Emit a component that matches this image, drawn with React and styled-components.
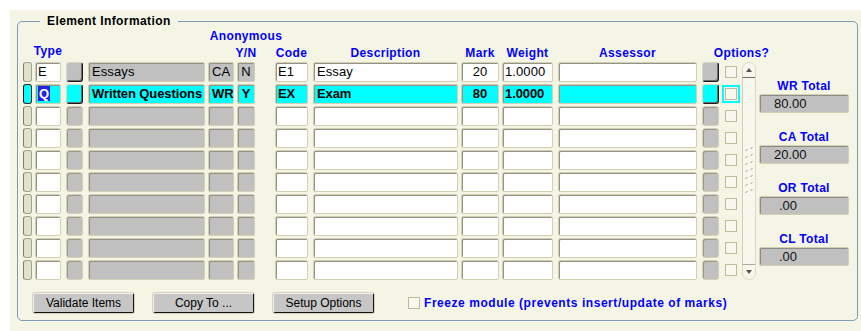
import React from 'react';
import styled, { createGlobalStyle, css } from 'styled-components';

const BEIGE = '#f5f5e6';
const BLUE = '#0000ff';
const CYAN = '#00ffff';
const GRAY = '#c0c0c0';

const records = [
  { type: 'E', name: 'Essays', ca: 'CA', yn: 'N', code: 'E1', desc: 'Essay', mark: '20', weight: '1.0000' },
  { type: 'Q', name: 'Written Questions', ca: 'WR', yn: 'Y', code: 'EX', desc: 'Exam', mark: '80', weight: '1.0000', current: true },
  ...Array.from({ length: 8 }, () => ({ empty: true })),
];

const totals = [
  { label: 'WR Total', value: '80.00', indent: 14 },
  { label: 'CA Total', value: '20.00', indent: 14 },
  { label: 'OR Total', value: '.00', indent: 19 },
  { label: 'CL Total', value: '.00', indent: 19 },
];

const App = () => {
  return (
    <>
      <GlobalStyle />
      <Page>
        <Panel>
          <Frame>
            <Legend>Element Information</Legend>
            <Sheet>
              <Header>
                <HeadCell $w={9} $ml={0} />
                <HeadCell $w={26} $ml={3} $lift={2}>Type</HeadCell>
                <HeadCell $w={17} $ml={5} />
                <HeadCell $w={117} $ml={5} />
                <HeadCell $w={26} $ml={3} />
                <HeadCell $w={18} $ml={3}>
                  <span>Anonymous</span>
                  <span>Y/N</span>
                </HeadCell>
                <HeadCell $w={33} $ml={20}>Code</HeadCell>
                <HeadCell $w={145} $ml={5}>Description</HeadCell>
                <HeadCell $w={38} $ml={3}>Mark</HeadCell>
                <HeadCell $w={51} $ml={3}>Weight</HeadCell>
                <HeadCell $w={139} $ml={5}>Assessor</HeadCell>
                <HeadCell $w={17} $ml={5} />
                <HeadCell $w={33} $ml={6}>Options?</HeadCell>
              </Header>

              <Records>
                {records.map((r, i) => {
                  const filled = !r.empty;
                  const on = !!r.current;
                  return (
                    <Record key={i}>
                      <Indicator $active={on} />
                      <Field $w={26} $ml={3} $pad={2} $active={on}>
                        {on ? <Selected>{r.type}</Selected> : r.type}
                      </Field>
                      <LovButton $ml={5} $raised={filled} $active={on} />
                      <Field $w={117} $ml={5} $tone="gray" $active={on}>{r.name}</Field>
                      <Field $w={26} $ml={3} $tone="gray" $active={on}>{r.ca}</Field>
                      <Field $w={18} $ml={3} $tone="gray" $align="center" $pad={0} $active={on}>{r.yn}</Field>
                      <Field $w={33} $ml={20} $pad={2} $active={on}>{r.code}</Field>
                      <Field $w={145} $ml={5} $active={on}>{r.desc}</Field>
                      <Field $w={38} $ml={3} $align="center" $active={on}>{r.mark}</Field>
                      <Field $w={51} $ml={3} $pad={2} $active={on}>{r.weight}</Field>
                      <Field $w={139} $ml={5} $active={on} />
                      <LovButton $ml={5} $raised={i === 0} $active={on} />
                      <CheckCell>
                        <Check $focus={on} />
                      </CheckCell>
                    </Record>
                  );
                })}
              </Records>

              <Scroll>
                <Arrow $dir="up" />
                <Thumb>
                  <svg width="9" height="48" viewBox="0 0 9 48">
                    {Array.from({ length: 7 }).map((_, k) => (
                      <g key={k} stroke="#9c9c8c" strokeWidth="1">
                        <line x1="0.5" y1={k * 7 + 4} x2="2.5" y2={k * 7 + 2} />
                        <line x1="5.5" y1={k * 7 + 2} x2="7.5" y2={k * 7} />
                      </g>
                    ))}
                  </svg>
                </Thumb>
                <Arrow $dir="down" />
              </Scroll>

              <Totals>
                {totals.map((t) => (
                  <TotalGroup key={t.label}>
                    <TotalLabel>{t.label}</TotalLabel>
                    <TotalBox $indent={t.indent}>{t.value}</TotalBox>
                  </TotalGroup>
                ))}
              </Totals>
            </Sheet>

            <Footer>
              <Button>Validate Items</Button>
              <Button>Copy To ...</Button>
              <Button>Setup Options</Button>
              <Freeze>
                <Check />
                <FreezeText>Freeze module (prevents insert/update of marks)</FreezeText>
              </Freeze>
            </Footer>
          </Frame>
        </Panel>
      </Page>
    </>
  );
};

export default App;

const GlobalStyle = createGlobalStyle`
  html, body {
    margin: 0;
    padding: 0;
    background: #ffffff;
  }
  body {
    font-family: "Liberation Sans", Arial, sans-serif;
    color: #000;
  }
`;

const Page = styled.div`
  padding: 10px 0 0 10px;
`;

const Panel = styled.div`
  box-sizing: border-box;
  height: 321px;
  background: ${BEIGE};
  padding: 4px 0 0 7px;
`;

const Frame = styled.fieldset`
  box-sizing: border-box;
  width: 841px;
  margin: 0;
  padding: 0 8px 7px 5px;
  border: 1px solid #7f9db9;
  border-radius: 5px;
  min-width: 0;
`;

const Legend = styled.legend`
  margin-left: 17px;
  padding: 0 7px;
  font-size: 12px;
  line-height: 14px;
  font-weight: 700;
  letter-spacing: 0.4px;
  color: #000;
`;

const Sheet = styled.div`
  display: grid;
  grid-template-columns: auto 14px 90px;
  grid-template-rows: 34px auto;
  column-gap: 3px;
`;

const Header = styled.div`
  grid-column: 1 / -1;
  display: flex;
  height: 34px;
`;

const HeadCell = styled.div`
  flex: none;
  width: ${(p) => p.$w}px;
  margin-left: ${(p) => p.$ml}px;
  padding-bottom: ${(p) => p.$lift || 0}px;
  display: flex;
  flex-direction: column;
  align-items: center;
  justify-content: flex-end;
  white-space: nowrap;
  font-size: 12px;
  line-height: 17px;
  font-weight: 700;
  letter-spacing: 0.35px;
  color: ${BLUE};
`;

const Records = styled.div`
  display: flex;
  flex-direction: column;
  gap: 2px;
  padding-right: 1px;
`;

const Record = styled.div`
  display: flex;
  align-items: center;
  height: 20px;
`;

const Indicator = styled.div`
  box-sizing: border-box;
  flex: none;
  width: 9px;
  height: 20px;
  border-radius: 3px;
  border: 1px solid ${(p) => (p.$active ? '#2a2a2a' : '#a4a48e')};
  border-left-color: ${(p) => (p.$active ? '#111' : '#7e7e6c')};
  background: ${(p) => (p.$active ? CYAN : '#e2e1cb')};
`;

const Field = styled.div`
  box-sizing: border-box;
  flex: none;
  width: ${(p) => p.$w}px;
  margin-left: ${(p) => p.$ml}px;
  height: 20px;
  padding: 0 ${(p) => (p.$pad ?? 3)}px;
  border: 1px solid #d2cfb3;
  border-radius: 2px;
  box-shadow: inset 1px 1px 0 #929289;
  background: ${(p) => (p.$active ? CYAN : p.$tone === 'gray' ? GRAY : '#ffffff')};
  font-size: 13px;
  line-height: 18px;
  font-weight: ${(p) => (p.$active ? 700 : 400)};
  letter-spacing: ${(p) => (p.$active ? '-0.1px' : '0.1px')};
  text-align: ${(p) => p.$align || 'left'};
  white-space: nowrap;
  overflow: hidden;
  color: #000;
`;

const Selected = styled.span`
  background: #2424e4;
  color: #ffffff;
  padding: 0 1px;
`;

const LovButton = styled.div`
  box-sizing: border-box;
  flex: none;
  width: 17px;
  height: 20px;
  margin-left: ${(p) => p.$ml}px;
  border-radius: 3px;
  background: ${(p) => (p.$active ? CYAN : GRAY)};
  ${(p) =>
    p.$raised || p.$active
      ? css`
          border: 1px solid;
          border-color: #d6d5c4 #1c1c1c #1c1c1c #d6d5c4;
          box-shadow: inset -1px -1px 0 #6a6a6a;
        `
      : css`
          border: 1px solid #d2cfb3;
          box-shadow: inset 1px 1px 0 #9a9a90;
        `}
`;

const CheckCell = styled.div`
  flex: none;
  width: 12px;
  margin-left: 6px;
  display: flex;
  align-items: center;
  justify-content: center;
`;

const Check = styled.span`
  display: block;
  box-sizing: border-box;
  flex: none;
  width: 12px;
  height: 12px;
  border: 1px solid #bdbb9c;
  background: #f8f8ee;
  ${(p) =>
    p.$focus &&
    css`
      outline: 2px solid ${CYAN};
      outline-offset: 1px;
    `}
`;

const Scroll = styled.div`
  grid-row: 2;
  grid-column: 2;
  box-sizing: border-box;
  display: flex;
  flex-direction: column;
  border: 1px solid #dcdac4;
  border-radius: 7px;
  background: #f7f7ed;
`;

const Arrow = styled.div`
  flex: none;
  height: 14px;
  display: flex;
  align-items: center;
  justify-content: center;

  &::after {
    content: '';
    border-left: 3px solid transparent;
    border-right: 3px solid transparent;
    ${(p) =>
      p.$dir === 'up'
        ? css`border-bottom: 4px solid #555;`
        : css`border-top: 4px solid #555;`}
  }
`;

const Thumb = styled.div`
  flex: 1;
  display: flex;
  align-items: center;
  justify-content: center;
  border-top: 1px solid #6f6f6a;
  border-bottom: 1px solid #a9a99a;
  border-left: 1px solid #cfcdb8;
  margin-left: -1px;
`;

const Totals = styled.div`
  grid-row: 2;
  grid-column: 3;
  display: flex;
  flex-direction: column;
  gap: 17px;
  padding-top: 17px;
`;

const TotalGroup = styled.div`
  display: flex;
  flex-direction: column;
  gap: 1px;
`;

const TotalLabel = styled.div`
  text-align: center;
  font-size: 12px;
  line-height: 14px;
  font-weight: 700;
  letter-spacing: 0.3px;
  color: ${BLUE};
`;

const TotalBox = styled.div`
  box-sizing: border-box;
  height: 19px;
  padding-left: ${(p) => p.$indent}px;
  border: 1px solid #d2cfb3;
  border-radius: 2px;
  box-shadow: inset 1px 1px 0 #8c8c86;
  background: ${GRAY};
  font-size: 13px;
  line-height: 17px;
  color: #111;
`;

const Footer = styled.div`
  display: flex;
  align-items: center;
  margin-top: 13px;
  padding-left: 10px;
`;

const Button = styled.button`
  box-sizing: border-box;
  width: 101px;
  height: 20px;
  margin: 0 19px 0 0;
  padding: 0;
  border: 1px solid;
  border-color: #f2f2ea #141414 #141414 #f2f2ea;
  border-radius: 2px;
  box-shadow: 0 0 0 1px #d4d2bb;
  background: #c6c6c6;
  font-family: "Liberation Sans", Arial, sans-serif;
  font-size: 12px;
  color: #000;
`;

const Freeze = styled.label`
  display: flex;
  align-items: center;
  gap: 4px;
  margin-left: 15px;
`;

const FreezeText = styled.span`
  font-size: 12px;
  line-height: 14px;
  font-weight: 700;
  letter-spacing: 0.55px;
  color: ${BLUE};
`;
